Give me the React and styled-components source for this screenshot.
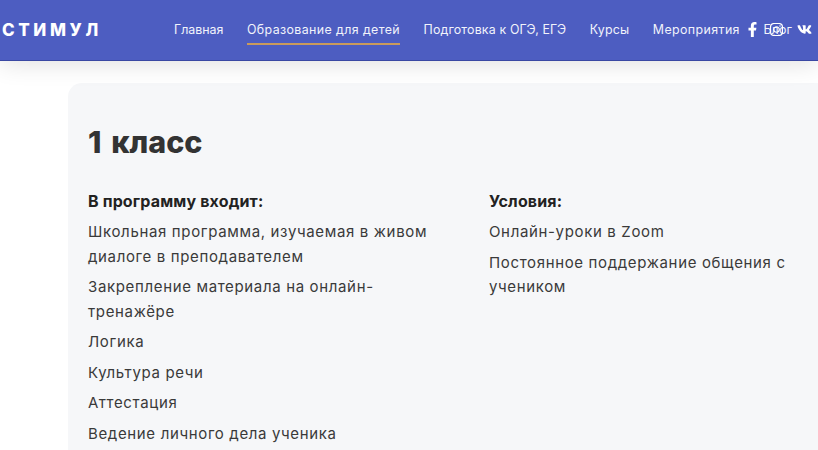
import React from "react";
import styled, { createGlobalStyle } from "styled-components";
import { FaFacebookF, FaInstagram, FaVk } from "react-icons/fa";

const GlobalStyle = createGlobalStyle`
  html, body {
    margin: 0;
    height: 450px;
    overflow: hidden;
    background: #fff;
    font-family: Inter, "Noto Sans", sans-serif;
    color: #333;
  }
`;

const Header = styled.header`
  position: relative;
  z-index: 1;
  display: flex;
  align-items: center;
  height: 60px;
  background: #4d5dc1;
  border-bottom: 1px solid #3a48a3;
  box-shadow: 0 3px 24px rgba(0, 0, 0, 0.12);
`;

const Logo = styled.div`
  width: 174px;
  padding-left: 2px;
  box-sizing: border-box;
  color: #fff;
  font-size: 17px;
  font-weight: 800;
  letter-spacing: 3.6px;
`;

const Nav = styled.nav`
  display: flex;
  gap: 23.5px;
  white-space: nowrap;
`;

const NavItem = styled.a`
  position: relative;
  color: #f1f3fb;
  font-size: 12.4px;
  letter-spacing: ${(props) => props.$spacing || "0.2px"};
  line-height: 20px;

  ${(props) =>
    props.$active &&
    `
    &::after {
      content: "";
      position: absolute;
      left: 0;
      right: 0;
      bottom: -5px;
      height: 2px;
      background: #c99a5b;
    }
  `}
`;

const Socials = styled.div`
  position: absolute;
  top: 22px;
  right: 6px;
  display: flex;
  align-items: center;
  gap: 13px;
  color: #fff;
  font-size: 15px;
`;

const FacebookIcon = styled(FaFacebookF)`
  margin-right: -4px;
`;

const Card = styled.main`
  margin: 22px -40px 0 68px;
  padding: 39px 20px 0;
  height: 360px;
  background: #f6f7f9;
  border-radius: 14px;
`;

const Title = styled.h1`
  margin: 0 0 27px;
  color: #333;
  font-size: 30.5px;
  line-height: 40px;
  font-weight: 800;
  word-spacing: 3px;
`;

const Columns = styled.div`
  display: grid;
  grid-template-columns: 401px 1fr;
`;

const Heading = styled.h3`
  margin: 0 0 6px;
  color: #222;
  font-size: 16px;
  line-height: 25px;
  font-weight: 700;
  letter-spacing: 0.15px;
`;

const Item = styled.p`
  margin: 0 0 6px;
  max-width: ${(props) => props.$width || 350}px;
  color: #3a3a3a;
  font-size: 15px;
  line-height: 24.5px;
  letter-spacing: 0.65px;
`;

const navItems = [
  { label: "Главная", spacing: "0" },
  { label: "Образование для детей", spacing: "0.4px", active: true },
  { label: "Подготовка к ОГЭ, ЕГЭ", spacing: "0.15px" },
  { label: "Курсы" },
  { label: "Мероприятия", spacing: "0.4px" },
  { label: "Блог" },
];

const programItems = [
  "Школьная программа, изучаемая в живом диалоге в преподавателем",
  "Закрепление материала на онлайн-тренажёре",
  "Логика",
  "Культура речи",
  "Аттестация",
  "Ведение личного дела ученика",
];

const conditionItems = [
  "Онлайн-уроки в Zoom",
  "Постоянное поддержание общения с учеником",
];

export default function App() {
  return (
    <>
      <GlobalStyle />
      <Header>
        <Logo>СТИМУЛ</Logo>
        <Nav>
          {navItems.map((item) => (
            <NavItem key={item.label} $active={item.active} $spacing={item.spacing}>
              {item.label}
            </NavItem>
          ))}
        </Nav>
        <Socials>
          <FacebookIcon />
          <FaInstagram />
          <FaVk />
        </Socials>
      </Header>
      <Card>
        <Title>1 класс</Title>
        <Columns>
          <div>
            <Heading>В программу входит:</Heading>
            {programItems.map((item) => (
              <Item key={item}>{item}</Item>
            ))}
          </div>
          <div>
            <Heading>Условия:</Heading>
            {conditionItems.map((item) => (
              <Item key={item} $width={320}>
                {item}
              </Item>
            ))}
          </div>
        </Columns>
      </Card>
    </>
  );
}
